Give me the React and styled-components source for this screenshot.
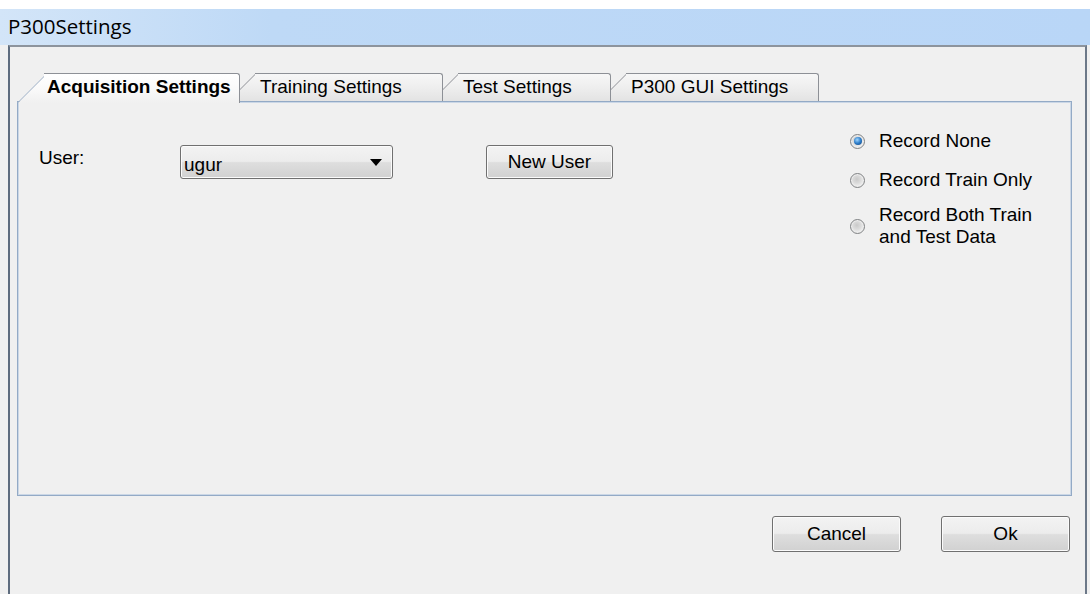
import React from 'react';
import styled, { createGlobalStyle } from 'styled-components';

const GlobalStyle = createGlobalStyle`
  html, body {
    margin: 0;
    padding: 0;
    background: #f0f0f0;
  }
  body {
    font-family: "Liberation Sans", Arial, sans-serif;
    color: #000;
  }
`;

const tabs = [
  { label: 'Acquisition Settings', width: 223 },
  { label: 'Training Settings', width: 215 },
  { label: 'Test Settings', width: 180 },
  { label: 'P300 GUI Settings', width: 220 },
];

const options = [
  { label: 'Record None', checked: true, gap: 0 },
  { label: 'Record Train Only', checked: false, gap: 17 },
  { label: 'Record Both Train and Test Data', checked: false, gap: 13 },
];

export default function App() {
  return (
    <>
      <GlobalStyle />
      <Page>
        <TopStrip />
        <TitleBar>P300Settings</TitleBar>
        <Frame>
          <TabStrip>
            {tabs.map((t, i) => (
              <Tab
                key={t.label}
                $width={t.width}
                $first={i === 0}
                $active={i === 0}
                $z={i === 0 ? 10 : tabs.length - i}
              >
                <TabLabel>{t.label}</TabLabel>
              </Tab>
            ))}
          </TabStrip>
          <TabPanel>
            <UserRow>
              <FieldLabel>User:</FieldLabel>
              <ComboBox>
                <ComboText>ugur</ComboText>
                <ComboArrow />
              </ComboBox>
              <NewUserButton type="button">New User</NewUserButton>
            </UserRow>
            <RadioGroup>
              {options.map((o) => (
                <RadioRow key={o.label} $gap={o.gap}>
                  <RadioDot $checked={o.checked} />
                  <RadioText>{o.label}</RadioText>
                </RadioRow>
              ))}
            </RadioGroup>
          </TabPanel>
          <Footer>
            <DialogButton type="button">Cancel</DialogButton>
            <DialogButton type="button">Ok</DialogButton>
          </Footer>
        </Frame>
      </Page>
    </>
  );
}

const Page = styled.div`
  width: 1090px;
  height: 594px;
  overflow: hidden;
  display: flex;
  flex-direction: column;
  background: #f0f0f0;
`;

const TopStrip = styled.div`
  height: 9px;
  background: #ffffff;
`;

const TitleBar = styled.div`
  height: 36px;
  padding-left: 8px;
  box-sizing: border-box;
  display: flex;
  align-items: center;
  padding-bottom: 3px;
  font-family: "Open Sans", "Noto Sans", sans-serif;
  font-size: 20.5px;
  color: #000;
  background: linear-gradient(to right, #d3e5f8 0%, #bed9f6 25%, #b9d6f7 100%);
`;

const Frame = styled.div`
  flex: 1;
  margin: 0 3px 0 8px;
  border-left: 2px solid #5e6c7e;
  border-right: 2px solid #6c7888;
  border-top: 2px solid #8d949d;
  padding: 26px 13px 0 7px;
  display: flex;
  flex-direction: column;
`;

const TabStrip = styled.div`
  display: flex;
  align-items: flex-end;
  position: relative;
  z-index: 1;
  height: 28px;
`;

const Tab = styled.div`
  position: relative;
  box-sizing: border-box;
  width: ${(p) => p.$width}px;
  height: ${(p) => (p.$active ? 30 : 28)}px;
  margin-left: ${(p) => (p.$first ? 0 : -12)}px;
  margin-bottom: ${(p) => (p.$active ? -2 : 0)}px;
  padding-left: ${(p) => (p.$active ? 30 : 32)}px;
  align-self: flex-start;
  z-index: ${(p) => p.$z};
  font-size: 19px;
  font-weight: ${(p) => (p.$active ? 'bold' : 'normal')};
  line-height: 28px;
  white-space: nowrap;

  &::before,
  &::after {
    content: '';
    position: absolute;
    top: 0;
    bottom: 0;
    z-index: 0;
    background: ${(p) =>
      p.$active
        ? 'linear-gradient(#ffffff 0%, #fafafa 50%, #f0f0f0 100%)'
        : 'linear-gradient(#f7f7f7 0%, #eeeeee 50%, #e3e3e3 100%)'};
    border-top: 1px solid #8d9096;
  }

  /* slanted left edge */
  &::before {
    left: 0;
    width: 40px;
    border-left: 1px solid ${(p) => (p.$active ? '#9fb1c8' : '#8d9096')};
    transform: skewX(-45deg);
    transform-origin: bottom left;
  }

  &::after {
    left: 27px;
    right: 0;
    border-right: 1px solid #8d9096;
    border-top-right-radius: 3px;
  }
`;

const TabLabel = styled.span`
  position: relative;
  z-index: 1;
`;

const TabPanel = styled.div`
  height: 395px;
  box-sizing: border-box;
  border: 1px solid #93aac6;
  box-shadow: inset 0 0 0 1px #cbd7e6;
  background: #f0f0f0;
  padding: 28px 2px 0 21px;
  display: flex;
  align-items: flex-start;
`;

const UserRow = styled.div`
  display: flex;
  align-items: flex-start;
  margin-top: 15px;
`;

const FieldLabel = styled.div`
  width: 141px;
  font-size: 19px;
  line-height: 22px;
  margin-top: 2px;
`;

const buttonFace = `
  box-sizing: border-box;
  border: 1px solid #707070;
  border-radius: 3px;
  background: linear-gradient(#f3f3f3 0%, #ececec 48%, #dedede 52%, #d1d1d1 100%);
  box-shadow: inset 0 0 0 1px #fbfbfb;
  font-family: "Liberation Sans", Arial, sans-serif;
  font-size: 19px;
  color: #000;
`;

const ComboBox = styled.div`
  ${buttonFace}
  width: 213px;
  height: 34px;
  display: flex;
  align-items: center;
  padding: 5px 10px 0 3px;
`;

const ComboText = styled.span`
  flex: 1;
`;

const ComboArrow = styled.span`
  width: 0;
  height: 0;
  margin-top: -4px;
  border-left: 6px solid transparent;
  border-right: 6px solid transparent;
  border-top: 7px solid #000;
`;

const NewUserButton = styled.button`
  ${buttonFace}
  width: 127px;
  height: 34px;
  margin-left: 93px;
  padding: 0;
`;

const RadioGroup = styled.div`
  margin-left: auto;
  width: 219px;
  display: flex;
  flex-direction: column;
`;

const RadioRow = styled.div`
  display: flex;
  align-items: center;
  margin-top: ${(p) => p.$gap}px;
`;

const RadioDot = styled.span`
  box-sizing: border-box;
  flex-shrink: 0;
  width: 15px;
  height: 15px;
  border-radius: 50%;
  border: 1px solid #7f8183;
  background: radial-gradient(circle at 45% 40%, #c9c9c9 0%, #dcdcdc 40%, #f4f4f4 75%, #ffffff 100%);
  box-shadow: inset 0 0 0 1px #ececec;
  display: flex;
  align-items: center;
  justify-content: center;

  &::after {
    content: '';
    display: ${(p) => (p.$checked ? 'block' : 'none')};
    width: 8px;
    height: 8px;
    border-radius: 50%;
    background: radial-gradient(circle at 40% 35%, #9fd6ff 0%, #2c7cc9 50%, #0e3f78 100%);
  }
`;

const RadioText = styled.span`
  margin-left: 14px;
  width: 165px;
  font-size: 19px;
  line-height: 22px;
`;

const Footer = styled.div`
  display: flex;
  justify-content: flex-end;
  gap: 40px;
  margin-top: 20px;
  padding-right: 2px;
`;

const DialogButton = styled.button`
  ${buttonFace}
  width: 129px;
  height: 36px;
  padding: 0;
`;
